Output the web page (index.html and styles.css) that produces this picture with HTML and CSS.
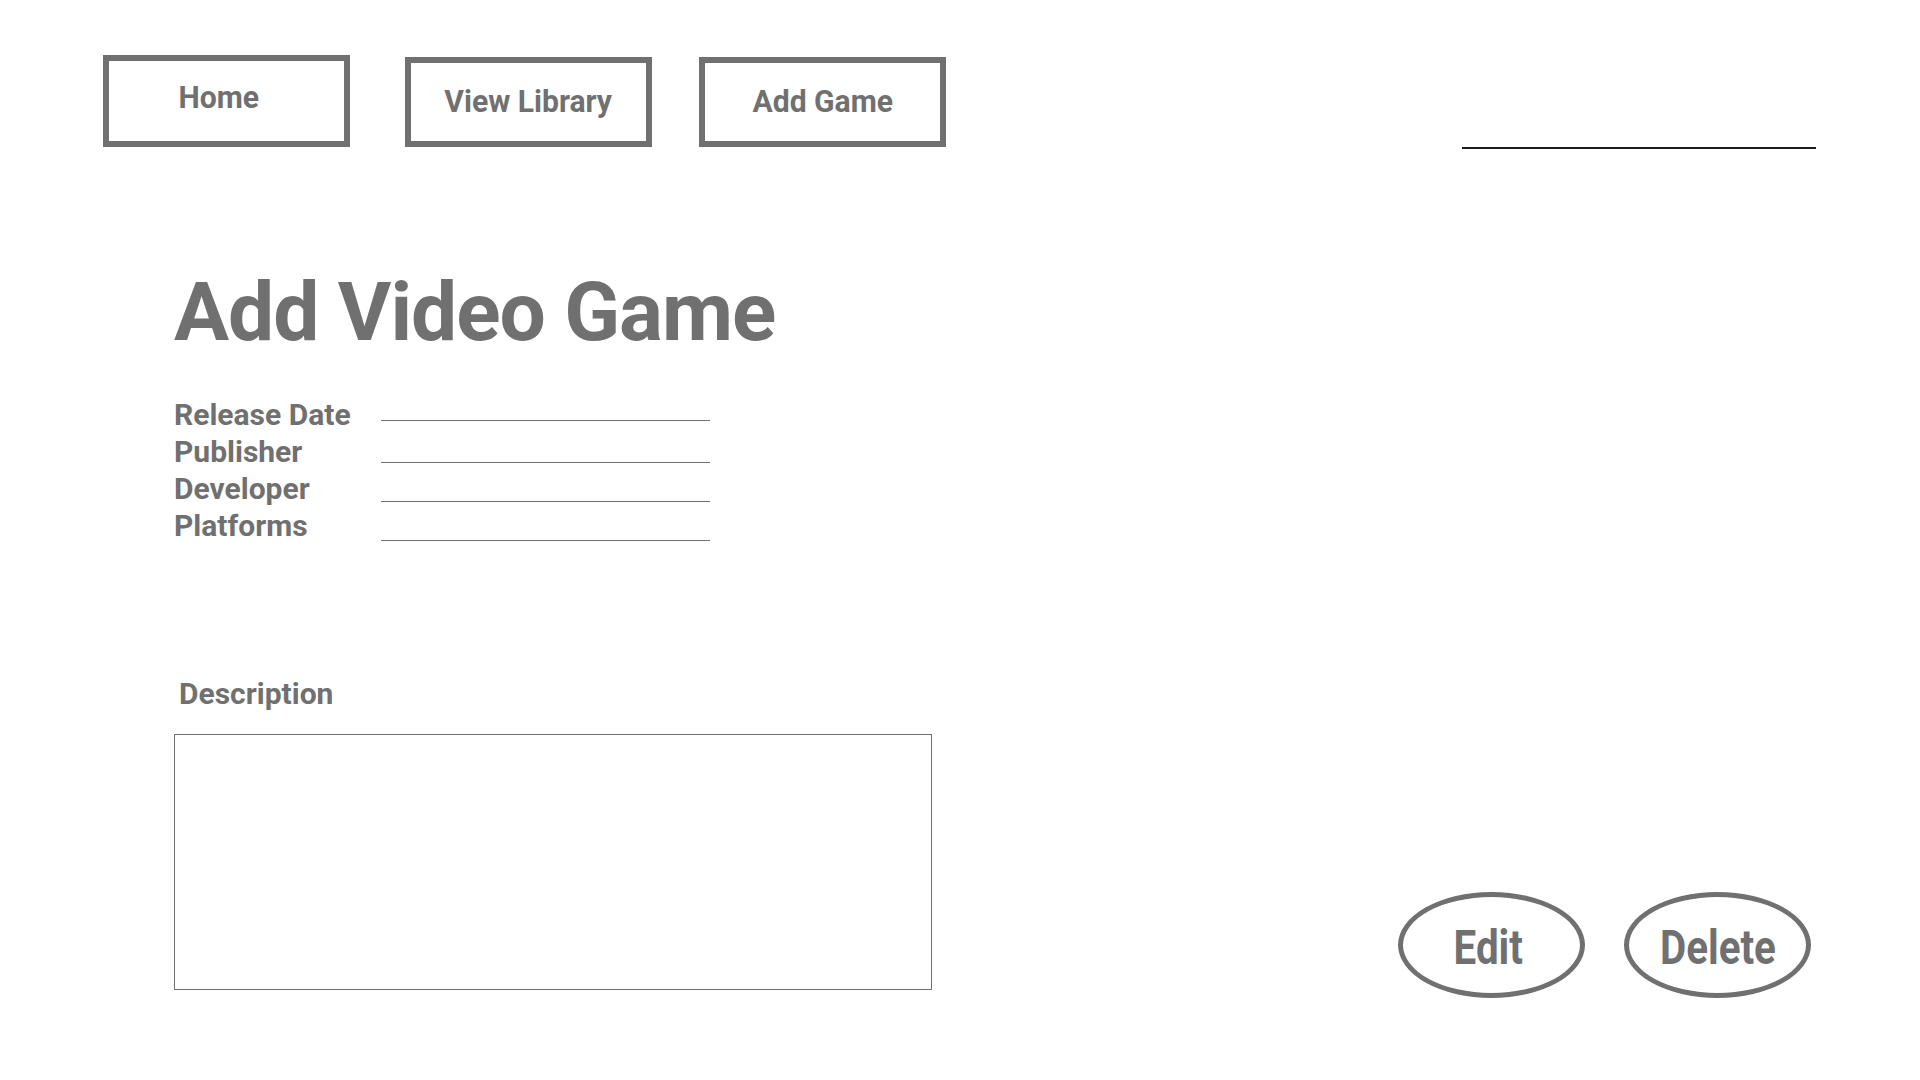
FILE: index.html
```html
<!DOCTYPE html>
<html lang="en">
<head>
<meta charset="utf-8">
<title>Add Video Game</title>
<link rel="stylesheet" href="styles.css">
</head>
<body>
<header class="header">
  <a class="nav-btn nav-home"><span class="nav-text">Home</span></a>
  <a class="nav-btn nav-library"><span class="nav-text">View Library</span></a>
  <a class="nav-btn nav-add"><span class="nav-text">Add Game</span></a>
  <div class="search-line"></div>
</header>
<main class="main">
  <section class="form-col">
    <h1 class="title">Add Video Game</h1>
    <div class="fields">
      <div class="labels">
        <div class="label">Release Date</div>
        <div class="label">Publisher</div>
        <div class="label">Developer</div>
        <div class="label">Platforms</div>
      </div>
      <div class="lines">
        <div class="line line-1"></div>
        <div class="line line-2"></div>
        <div class="line line-3"></div>
        <div class="line line-4"></div>
      </div>
    </div>
    <div class="desc-label">Description</div>
    <div class="desc-box"></div>
  </section>
  <section class="actions">
    <div class="oval oval-edit"><span class="oval-text">Edit</span></div>
    <div class="oval"><span class="oval-text">Delete</span></div>
  </section>
</main>
</body>
</html>
```
FILE: styles.css
```css
html, body {
  margin: 0;
  padding: 0;
  background: #ffffff;
}
body {
  width: 1920px;
  height: 1080px;
  font-family: Roboto, "Noto Sans", "Liberation Sans", sans-serif;
  color: #707070;
  overflow: hidden;
}

.header {
  display: flex;
  align-items: flex-start;
  padding: 55px 104px 0 103px;
}
.nav-btn {
  box-sizing: border-box;
  width: 247px;
  height: 90px;
  margin-top: 2px;
  border: 6px solid #707070;
  display: flex;
  align-items: center;
  justify-content: center;
  font-size: 32px;
  font-weight: 700;
  padding-bottom: 3px;
  color: #707070;
  text-decoration: none;
}
.nav-text {
  display: inline-block;
  transform: scaleX(0.94);
}
.nav-home {
  height: 92px;
  margin-top: 0;
  padding-bottom: 9px;
  padding-right: 16px;
}
.nav-library {
  margin-left: 55px;
}
.nav-add {
  margin-left: 47px;
}
.search-line {
  margin-left: auto;
  width: 354px;
  height: 92px;
  border-bottom: 2px solid #1a1a1a;
}

.main {
  display: flex;
  padding-left: 174px;
  padding-right: 109px;
}
.form-col {
  display: flex;
  flex-direction: column;
  flex: none;
}
.title {
  margin: 122px 0 0 0;
  font-size: 82px;
  line-height: 1;
  font-weight: 700;
  letter-spacing: -1px;
}
.fields {
  display: flex;
  margin-top: 39px;
}
.labels {
  width: 207px;
  padding-top: 4px;
}
.label {
  font-size: 30px;
  line-height: 37px;
  font-weight: 700;
  white-space: nowrap;
}
.lines {
  width: 329px;
}
.line {
  border-bottom: 1px solid #707070;
}
.line-1 { height: 28px; }
.line-2 { height: 41px; }
.line-3 { height: 38px; }
.line-4 { height: 38px; }

.desc-label {
  margin: 131px 0 0 5px;
  font-size: 30px;
  line-height: 37px;
  font-weight: 700;
}
.desc-box {
  box-sizing: border-box;
  margin-top: 22px;
  width: 758px;
  height: 256px;
  border: 1px solid #707070;
}

.actions {
  flex: 1;
  display: flex;
  justify-content: flex-end;
  align-items: flex-end;
  gap: 39px;
  margin-bottom: -8px;
}
.oval {
  box-sizing: border-box;
  width: 187px;
  height: 106px;
  border: 5px solid #707070;
  border-radius: 50%;
  display: flex;
  align-items: center;
  justify-content: center;
  font-size: 48px;
  font-weight: 700;
  padding-top: 4px;
}
.oval-edit {
  padding-right: 6px;
}
.oval-text {
  display: inline-block;
  transform: scaleX(0.84);
}
```
